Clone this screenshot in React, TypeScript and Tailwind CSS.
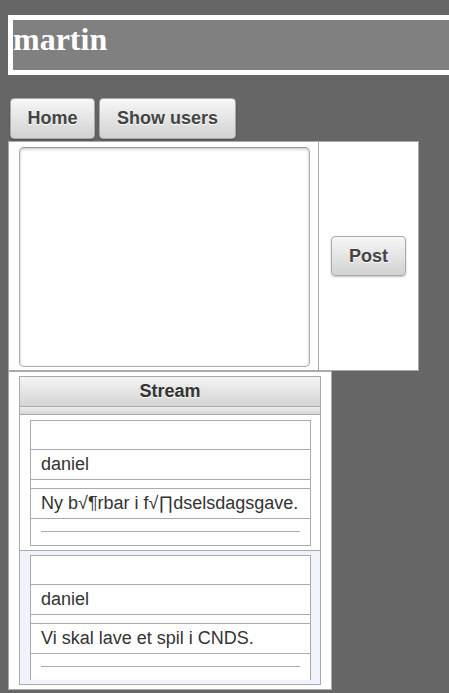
const btn =
  "flex items-center justify-center rounded-[4px] border border-[#a9a9a9] bg-linear-to-b from-[#f7f7f7] to-[#d2d2d2] text-[18px] font-bold text-[#444] [text-shadow:0_1px_0_#fff] shadow-[0_1px_2px_rgba(0,0,0,0.25)]";

type Post = { user: string; text: string };

const posts: Post[] = [
  { user: "daniel", text: "Ny b√¶rbar i f√∏dselsdagsgave." },
  { user: "daniel", text: "Vi skal lave et spil i CNDS." },
];

function PostItem({ post, index }: { post: Post; index: number }) {
  return (
    <div
      className={`border-b border-[#aaa] pl-[10px] pr-[9px] pb-[4px] ${
        index === 0 ? "bg-white pt-[5px]" : "bg-[#f0f4fa] pt-[4px]"
      }`}
    >
      <div className="border border-[#aaa] bg-white text-[18px] leading-[21px] text-[#333]">
        <div className="h-[29px] border-b border-[#aaa]" />
        <div className="h-[30px] border-b border-[#aaa] px-[10px] py-1">{post.user}</div>
        <div className="h-[9px] border-b border-[#aaa]" />
        <div className="h-[30px] border-b border-[#aaa] px-[10px] py-1">{post.text}</div>
        <div className="h-[26px] px-[10px] pt-[12px]">
          <div className="h-px bg-[#aaa]" />
        </div>
      </div>
    </div>
  );
}

export default function App() {
  return (
    <div className="min-h-screen w-full overflow-hidden bg-[#666666] pt-[15px] font-['Liberation_Sans',Arial,sans-serif]">
      <div className="ml-[8px] h-[60px] w-[470px] border-[5px] border-white bg-[#808080]">
        <h1 className="font-['Liberation_Serif',serif] text-[32px] font-bold leading-[38px] text-white">
          martin
        </h1>
      </div>

      <div className="ml-[10px] mt-[23px] flex gap-[4px]">
        <button className={`${btn} h-[41px] w-[85px]`}>Home</button>
        <button className={`${btn} h-[41px] w-[137px]`}>Show users</button>
      </div>

      <div className="ml-[8px] mt-[2px] flex h-[230px] w-[411px] border border-[#aaa] bg-white">
        <div className="w-[310px] border-r border-[#aaa] pb-[3px] pl-[10px] pr-[9px] pt-[5px]">
          <textarea className="block h-[220px] w-[291px] resize-none rounded-[5px] border border-[#aaa] border-t-[#999] bg-white shadow-[inset_0_1px_3px_rgba(0,0,0,0.25)] outline-none" />
        </div>
        <div className="flex flex-1 items-center justify-center">
          <button className={`${btn} h-[40px] w-[75px]`}>Post</button>
        </div>
      </div>

      <div className="ml-[8px] h-[319px] w-[324px] border border-[#aaa] bg-white pl-[10px] pt-[4px]">
        <div className="h-[309px] w-[302px] border border-[#aaa]">
          <div className="flex h-[30px] items-center justify-center border-b border-[#aaa] bg-linear-to-b from-[#f4f4f4] to-[#d4d4d4] text-[18px] font-bold text-[#333] [text-shadow:0_1px_0_#fff]">
            Stream
          </div>
          <div className="h-[8px] border-b border-[#aaa] bg-linear-to-b from-[#eeeeee] to-[#d6d6d6]" />
          <div className="h-[269px] bg-[#f0f4fa] pb-[4px]">
            <div className="h-[265px] overflow-hidden">
              {posts.map((p, i) => (
                <PostItem key={i} post={p} index={i} />
              ))}
            </div>
          </div>
        </div>
      </div>
    </div>
  );
}
